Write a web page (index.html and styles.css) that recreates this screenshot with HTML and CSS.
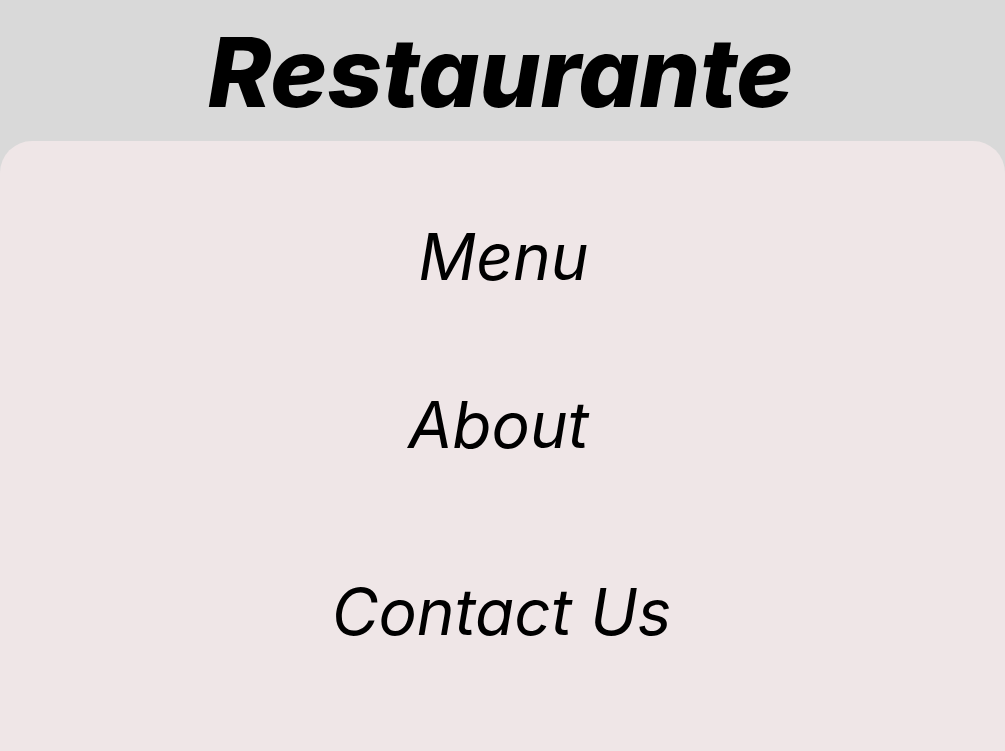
FILE: index.html
```html
<!DOCTYPE html>
<html>
<head>
<meta charset="utf-8">
<link rel="stylesheet" href="styles.css">
</head>
<body>
<header class="top">
  <h1 class="title">Restaurante</h1>
</header>
<nav class="panel">
  <a class="item item-menu" href="#">Menu</a>
  <a class="item item-about" href="#">About</a>
  <a class="item item-contact" href="#">Contact Us</a>
</nav>
</body>
</html>
```
FILE: styles.css
```css
html, body {
  margin: 0;
  padding: 0;
  height: 100%;
}
body {
  background: #d9d9d9;
  font-family: Inter, "Noto Sans", sans-serif;
  display: flex;
  flex-direction: column;
  overflow: hidden;
}
.top {
  height: 141px;
  flex: 0 0 141px;
  display: flex;
  justify-content: center;
}
.title {
  margin: 0;
  font-size: 96px;
  font-weight: 800;
  font-style: italic;
  line-height: 1;
  padding-top: 24px;
  padding-right: 4px;
  color: #000;
}
.panel {
  flex: 1;
  background: #efe6e7;
  border-radius: 32px 32px 0 0;
  display: flex;
  flex-direction: column;
  align-items: center;
}
.item {
  color: #000;
  text-decoration: none;
  font-style: italic;
  font-size: 64px;
  line-height: 1;
}
.item-menu { margin-top: 84px; margin-left: 2px; }
.item-about { margin-top: 104px; margin-right: 8px; }
.item-contact { margin-top: 123px; margin-right: 2px; }
```
